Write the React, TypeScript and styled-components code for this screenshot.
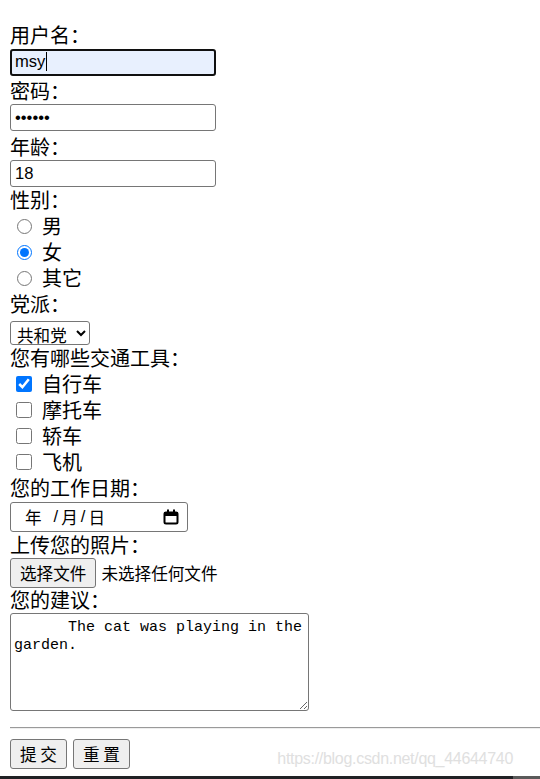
import styled, { createGlobalStyle } from "styled-components";

const GlobalStyle = createGlobalStyle`
  html, body {
    margin: 0;
    padding: 0;
    background: #fff;
  }
  body {
    font-family: "Noto Sans CJK SC", "Liberation Sans", sans-serif;
    color: #000;
  }
`;

const Page = styled.div`
  min-height: 100vh;
  display: flex;
  flex-direction: column;
  position: relative;
`;

const Form = styled.form`
  display: flex;
  flex-direction: column;
  align-items: flex-start;
  padding: 22px 0 0 10px;
`;

const FieldLabel = styled.div`
  height: 26px;
  line-height: 26px;
  font-size: 20px;
  white-space: nowrap;
`;

const Row = styled.div<{ $h: number }>`
  height: ${(p) => p.$h}px;
  display: flex;
  align-items: flex-start;
`;

const InputWrap = styled.span`
  position: relative;
  display: inline-block;
`;

const TextInput = styled.input<{ $focused?: boolean }>`
  box-sizing: border-box;
  width: 206px;
  height: 27px;
  margin: 0;
  padding: 0 ${(p) => (p.$focused ? 3 : 4)}px;
  font-family: "Liberation Sans", Arial, sans-serif;
  font-size: 16.6px;
  color: #000;
  background: ${(p) => (p.$focused ? "#e8f0fe" : "#fff")};
  border: ${(p) => (p.$focused ? "2px solid #101010" : "1px solid #767676")};
  border-radius: 3px;
  outline: none;
`;

const Caret = styled.span`
  position: absolute;
  left: 36px;
  top: 4px;
  width: 1px;
  height: 19px;
  background: #000;
`;

const Choice = styled.label`
  height: 26px;
  line-height: 26px;
  display: flex;
  align-items: center;
  gap: 10px;
  padding-left: 7px;
  font-size: 20px;
`;

const Radio = styled.input`
  width: 15px;
  height: 15px;
  margin: 0;
`;

const Check = styled.input`
  width: 16px;
  height: 16px;
  margin: 0 0 0 -1px;
`;

const Select = styled.select`
  margin-top: 4px;
  width: 80px;
  height: 24px;
  font-family: "Noto Sans CJK SC", sans-serif;
  font-size: 16.6px;
  color: #000;
  background: #fff;
  border: 1px solid #767676;
  border-radius: 3px;
  padding: 0 0 0 2px;
`;

const DateBox = styled.div`
  box-sizing: border-box;
  width: 178px;
  height: 30px;
  margin-top: 1px;
  display: flex;
  align-items: center;
  padding: 0 8px 0 14px;
  border: 1px solid #767676;
  border-radius: 3px;
  font-size: 16.6px;
  line-height: 20px;
`;

const Sep = styled.span<{ $wide?: boolean }>`
  margin: 0 3px 0 ${(p) => (p.$wide ? 12 : 3)}px;
  font-family: "Liberation Sans", sans-serif;
`;

const CalIcon = styled.svg`
  margin-left: auto;
`;

const FileRow = styled.div`
  display: flex;
  align-items: center;
  height: 29px;
  font-size: 16.6px;
  line-height: 20px;
`;

const PlainButton = styled.button`
  box-sizing: border-box;
  height: 30px;
  margin: 0;
  padding: 0 9px;
  font-family: "Noto Sans CJK SC", sans-serif;
  font-size: 16.6px;
  line-height: 20px;
  color: #000;
  background: #efefef;
  border: 1px solid #767676;
  border-radius: 3px;
`;

const FileName = styled.span`
  margin-left: 5px;
`;

const TextArea = styled.textarea`
  box-sizing: border-box;
  width: 299px;
  height: 98px;
  margin: 0 0 6px;
  padding: 5px 3px 2px;
  font-family: "Liberation Mono", monospace;
  font-size: 15px;
  line-height: 18px;
  color: #000;
  border: 1px solid #767676;
  border-radius: 3px;
  outline: none;
`;

const Rule = styled.hr`
  align-self: stretch;
  margin: 10px 0;
  border: none;
  border-top: 1px solid #9a9a9a;
  border-bottom: 1px solid #eeeeee;
`;

const Buttons = styled.div`
  display: flex;
  gap: 6px;
`;

const Watermark = styled.div`
  position: absolute;
  right: 27px;
  bottom: 11px;
  font-family: "Liberation Sans", Arial, sans-serif;
  font-size: 16px;
  letter-spacing: -0.3px;
  color: #e0e0e0;
`;

const BottomBar = styled.div`
  margin-top: auto;
  height: 3px;
  display: flex;
`;

const BarPart = styled.div<{ $c: string; $w?: string }>`
  background: ${(p) => p.$c};
  flex: ${(p) => (p.$w ? `0 0 ${p.$w}` : "1")};
`;

const genders = [
  { v: "male", t: "男" },
  { v: "female", t: "女" },
  { v: "other", t: "其它" },
];

const vehicles = [
  { v: "bike", t: "自行车", on: true },
  { v: "moto", t: "摩托车", on: false },
  { v: "car", t: "轿车", on: false },
  { v: "plane", t: "飞机", on: false },
];

export default function App() {
  return (
    <Page>
      <GlobalStyle />
      <Form onSubmit={(e) => e.preventDefault()}>
        <FieldLabel>用户名：</FieldLabel>
        <Row $h={30}>
          <InputWrap>
            <TextInput $focused type="text" defaultValue="msy" />
            <Caret />
          </InputWrap>
        </Row>
        <FieldLabel>密码：</FieldLabel>
        <Row $h={30}>
          <TextInput type="password" defaultValue="123456" />
        </Row>
        <FieldLabel>年龄：</FieldLabel>
        <Row $h={27}>
          <TextInput type="text" defaultValue="18" />
        </Row>
        <FieldLabel>性别：</FieldLabel>
        {genders.map((g) => (
          <Choice key={g.v}>
            <Radio type="radio" name="sex" value={g.v} defaultChecked={g.v === "female"} />
            {g.t}
          </Choice>
        ))}
        <FieldLabel>党派：</FieldLabel>
        <Row $h={28}>
          <Select defaultValue="rep">
            <option value="rep">共和党</option>
            <option value="dem">民主党</option>
          </Select>
        </Row>
        <FieldLabel>您有哪些交通工具：</FieldLabel>
        {vehicles.map((c) => (
          <Choice key={c.v}>
            <Check type="checkbox" value={c.v} defaultChecked={c.on} />
            {c.t}
          </Choice>
        ))}
        <FieldLabel>您的工作日期：</FieldLabel>
        <Row $h={31}>
          <DateBox>
            <span>年</span>
            <Sep $wide>/</Sep>
            <span>月</span>
            <Sep>/</Sep>
            <span>日</span>
            <CalIcon width="16" height="16" viewBox="0 0 16 16">
              <rect x="1.5" y="3.5" width="13" height="11" rx="1.5" fill="none" stroke="#000" strokeWidth="2" />
              <rect x="1" y="3" width="14" height="4" fill="#000" />
              <rect x="4" y="0.5" width="2" height="3" fill="#000" />
              <rect x="10" y="0.5" width="2" height="3" fill="#000" />
            </CalIcon>
          </DateBox>
        </Row>
        <FieldLabel>上传您的照片：</FieldLabel>
        <FileRow>
          <PlainButton type="button">选择文件</PlainButton>
          <FileName>未选择任何文件</FileName>
        </FileRow>
        <FieldLabel>您的建议：</FieldLabel>
        <TextArea defaultValue={"      The cat was playing in the garden."} />
        <Rule />
        <Buttons>
          <PlainButton type="submit">提 交</PlainButton>
          <PlainButton type="reset">重 置</PlainButton>
        </Buttons>
      </Form>
      <Watermark>https://blog.csdn.net/qq_44644740</Watermark>
      <BottomBar>
        <BarPart $c="#202124" />
        <BarPart $c="#5a5a5a" $w="27px" />
      </BottomBar>
    </Page>
  );
}
